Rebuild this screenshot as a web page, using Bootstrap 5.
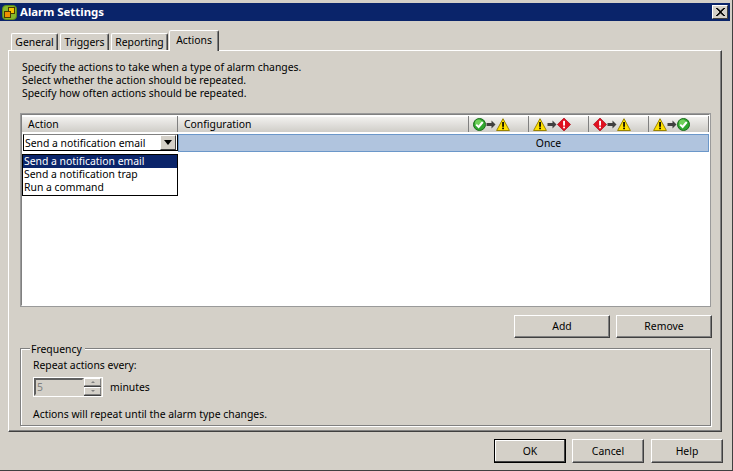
<!DOCTYPE html>
<html lang="en">
<head>
<meta charset="utf-8">
<title>Alarm Settings</title>
<link href="https://cdn.jsdelivr.net/npm/bootstrap@5.3.0/dist/css/bootstrap.min.css" rel="stylesheet">
<style>
html,body{margin:0;height:100%;overflow:hidden;background:#d4d0c8}
body{font-family:"Noto Sans","Liberation Sans",sans-serif;font-size:10.4px;line-height:13px;color:#000}
.win{width:733px;height:471px;background:#d4d0c8;padding:3px 2px 2px 0;border-right:1px solid #404040;border-bottom:1px solid #404040;display:flex;flex-direction:column;box-sizing:border-box}
.win-title{height:18px;background:#0a246a;color:#fff;font-weight:700;font-size:11.4px;padding-left:2px;flex:none}
.ttl-txt{padding-bottom:1px}
.ttl{gap:3px}
.win-close{width:16px;height:14px;background:#d4d0c8;border:1px solid;border-color:#fff #404040 #404040 #fff;margin-right:2px;padding:0;display:flex;align-items:center;justify-content:center}
.dlg-body{padding:9px 8px 0 8px;flex:1 1 auto;min-height:0}
.nav-tabs.wt{border:0;padding-left:3px;height:20px;align-items:flex-end;gap:2px;flex-wrap:nowrap;position:relative;z-index:2}
.wt .nav-link{border:1px solid;border-color:#fff #404040 transparent #fff;border-bottom:0;border-radius:2px 2px 0 0;background:#d4d0c8;color:#000;padding:2px 0 0;height:17px;margin:0;text-align:center;font-size:10.4px;line-height:13px;box-shadow:inset -1px 0 0 #808080}
.wt .nav-link.active{height:21px;margin-bottom:-1px;margin-left:-1px;padding-top:3px;background:#d4d0c8;color:#000;border-color:#fff #404040 transparent #fff}
.t1{width:47px}.t2{width:49px}.t3{width:57px}.t4{width:50px}
.tabpanel{height:382px;border:1px solid;border-color:#fff #404040 #404040 #fff;box-shadow:inset -1px -1px 0 #808080;padding:10px 11px 0 11px}
.intro{padding-left:2px;margin:0 0 13px;height:39px}
.grid-box{height:194px;width:691px;border:2px solid;border-color:#808080 #fff #fff #808080;outline:1px solid #9a9a9a;outline-offset:-1px;background:#fff;padding:1px 0 0 0;position:relative}
.grid-head,.grid-row{display:grid;grid-template-columns:156px 291px 60px 60px 60px 60px}
.grid-head{height:18px;background:#fff}
.hcell{height:16px;background:linear-gradient(#f4f3f1,#cfcdc8);border-right:1px solid #808080;box-shadow:inset 0 1px 0 #fff;padding:1px 0 0 6px;display:flex;align-items:center}
.hcell.ic{padding:0 0 0 4px}
.grid-row{height:18px}
.once-row{grid-column:2/7;background:#b0c4de;border:1px solid #6b97c9;display:grid;grid-template-columns:290px 159px;align-items:center;text-align:center;height:18px}
.combo{height:17px;background:#fff;border:1px solid #000;border-top-color:#808080;margin-left:1px;display:flex;align-items:center;padding:2px 0 0 1px;position:relative}
.combo-btn{position:absolute;right:1px;top:0;bottom:0;width:16px;background:#d4d0c8;border:1px solid;border-color:#fff #404040 #404040 #fff;display:flex;align-items:center;justify-content:center}
.tri{width:0;height:0;border:4px solid transparent;border-top:5px solid #000;border-bottom:0}
.drop{position:absolute;left:0;top:39px;width:156px;height:42px;background:#fff;border:1px solid #000;z-index:5;margin:0;padding:0;list-style:none}
.drop li{height:13px;line-height:13px;padding-left:1px}
.drop li.sel{background:#0a246a;color:#fff}
.act-row{height:23px;margin-top:8px;width:692px;gap:6px}
.wbtn{background:#d4d0c8;border:1px solid;border-color:#fff #404040 #404040 #fff;box-shadow:inset -1px -1px 0 #808080;border-radius:0;color:#000;font-size:10.4px;line-height:13px;padding:0;width:96px;height:23px}
.wbtn:hover{background:#d4d0c8;color:#000;border-color:#fff #404040 #404040 #fff}
.freq{width:691px;height:78px;margin-top:10px;border:1px solid #808080;box-shadow:inset 1px 1px 0 #fff,1px 1px 0 #fff;position:relative;padding:10px 12px 0}
.freq-leg{position:absolute;top:-6px;left:9px;padding:0 3px 0 1px;background:#d4d0c8}
.freq-spin{margin-top:5px;height:20px;gap:7px}
.spin{width:70px;height:20px;border:1px solid #fff;display:flex;background:#d4d0c8}
.spin-in{width:50px;height:18px;border:2px solid;border-color:#606060 #d4d0c8 #d4d0c8 #606060;color:#808080;padding-left:1px;line-height:15px}
.spin-arrows{width:17px;display:flex;flex-direction:column;height:18px;background:#404040;gap:1px;padding-bottom:1px}
.spin-arrows span{flex:1;background:#d4d0c8;border:1px solid;border-color:#fff #808080 #808080 #fff;display:flex;align-items:center;justify-content:center}
.ua{width:0;height:0;border:2px solid transparent;border-bottom:2px solid #808080;border-top:0}
.da{width:0;height:0;border:2px solid transparent;border-top:2px solid #808080;border-bottom:0}
.freq-note{margin-top:11px}
.foot{height:25px;margin-top:7px;gap:6px;width:715px}
.wbtn.ft{width:72px;height:24px}
.wbtn.def{border:1px solid #000;box-shadow:inset -1px -1px 0 #404040,inset 1px 1px 0 #fff}
.foot .ml7{margin-left:1px}
</style>
</head>
<body>
<svg width="0" height="0" class="d-block" aria-hidden="true">
<defs>
<symbol id="ok" viewBox="0 0 13 13"><circle cx="6.5" cy="6.5" r="6" fill="#2fa72f" stroke="#1c6b1c"/><circle cx="5.5" cy="5" r="3.5" fill="#6fd05a"/><path d="M3.2 6.6 5.6 9 9.8 4" fill="none" stroke="#fff" stroke-width="2"/></symbol>
<symbol id="warn" viewBox="0 0 14 13"><path d="M7 .7 13.4 12.5H.6Z" fill="#ffe000" stroke="#9a8400"/><rect x="6.2" y="4" width="1.7" height="4.8" fill="#000"/><rect x="6.2" y="9.6" width="1.7" height="1.6" fill="#000"/></symbol>
<symbol id="crit" viewBox="0 0 14 13"><path d="M7 0 13.6 6.5 7 13 .4 6.5Z" fill="#e01020" stroke="#a00010" stroke-width=".6"/><rect x="6.1" y="2.8" width="1.9" height="4.8" fill="#fff"/><rect x="6.1" y="8.6" width="1.9" height="1.7" fill="#fff"/></symbol>
<symbol id="arr" viewBox="0 0 9 9"><path d="M0 3H5V.5L9 4.5 5 8.5V6H0Z" fill="#404040"/></symbol>
</defs>
</svg>
<div class="win">
  <div class="win-title d-flex align-items-center justify-content-between">
    <span class="d-flex align-items-center ttl">
      <svg width="15" height="15" viewBox="0 0 15 15"><rect x=".5" y=".5" width="14" height="14" rx="3.5" fill="#86b82c" stroke="#5c8a18"/><rect x="6.5" y="2.5" width="6" height="6" fill="#f7c200" stroke="#4a3a00"/><rect x="2.5" y="6.5" width="6" height="6" fill="#f09000" stroke="#4a3a00"/></svg>
      <span class="ttl-txt">Alarm Settings</span>
    </span>
    <button class="win-close" type="button" aria-label="Close"><svg width="9" height="8" viewBox="0 0 9 8"><path d="M1 0 4.5 3 8 0H9L5 4 9 8H8L4.5 5 1 8H0L4 4 0 0Z" fill="#000" stroke="#000" stroke-width=".8"/></svg></button>
  </div>
  <div class="dlg-body">
    <ul class="nav nav-tabs wt">
      <li class="nav-item"><a class="nav-link t1" href="#">General</a></li>
      <li class="nav-item"><a class="nav-link t2" href="#">Triggers</a></li>
      <li class="nav-item"><a class="nav-link t3" href="#">Reporting</a></li>
      <li class="nav-item"><a class="nav-link t4 active" href="#">Actions</a></li>
    </ul>
    <div class="tabpanel">
      <p class="intro">Specify the actions to take when a type of alarm changes.<br>Select whether the action should be repeated.<br>Specify how often actions should be repeated.</p>
      <div class="grid-box">
        <div class="grid-head">
          <div class="hcell">Action</div>
          <div class="hcell">Configuration</div>
          <div class="hcell ic"><svg width="13" height="13"><use href="#ok"/></svg><svg width="10" height="9"><use href="#arr"/></svg><svg width="14" height="13"><use href="#warn"/></svg></div>
          <div class="hcell ic"><svg width="14" height="13"><use href="#warn"/></svg><svg width="10" height="9"><use href="#arr"/></svg><svg width="14" height="13"><use href="#crit"/></svg></div>
          <div class="hcell ic"><svg width="14" height="13"><use href="#crit"/></svg><svg width="10" height="9"><use href="#arr"/></svg><svg width="14" height="13"><use href="#warn"/></svg></div>
          <div class="hcell ic"><svg width="14" height="13"><use href="#warn"/></svg><svg width="10" height="9"><use href="#arr"/></svg><svg width="13" height="13"><use href="#ok"/></svg></div>
        </div>
        <div class="grid-row">
          <div class="combo">Send a notification email<span class="combo-btn"><span class="tri"></span></span></div>
          <div class="once-row"><span></span><span>Once</span></div>
        </div>
        <ul class="drop">
          <li class="sel">Send a notification email</li>
          <li>Send a notification trap</li>
          <li>Run a command</li>
        </ul>
      </div>
      <div class="d-flex justify-content-end act-row">
        <button class="btn wbtn" type="button">Add</button>
        <button class="btn wbtn" type="button">Remove</button>
      </div>
      <div class="freq">
        <div class="freq-leg">Frequency</div>
        <div>Repeat actions every:</div>
        <div class="d-flex align-items-center freq-spin">
          <div class="spin"><div class="spin-in">5</div><div class="spin-arrows"><span><i class="ua"></i></span><span><i class="da"></i></span></div></div>
          <span>minutes</span>
        </div>
        <div class="freq-note">Actions will repeat until the alarm type changes.</div>
      </div>
    </div>
    <div class="d-flex justify-content-end foot">
      <button class="btn wbtn ft def" type="button">OK</button>
      <button class="btn wbtn ft" type="button">Cancel</button>
      <button class="btn wbtn ft ml7" type="button">Help</button>
    </div>
  </div>
</div>
</body>
</html>
